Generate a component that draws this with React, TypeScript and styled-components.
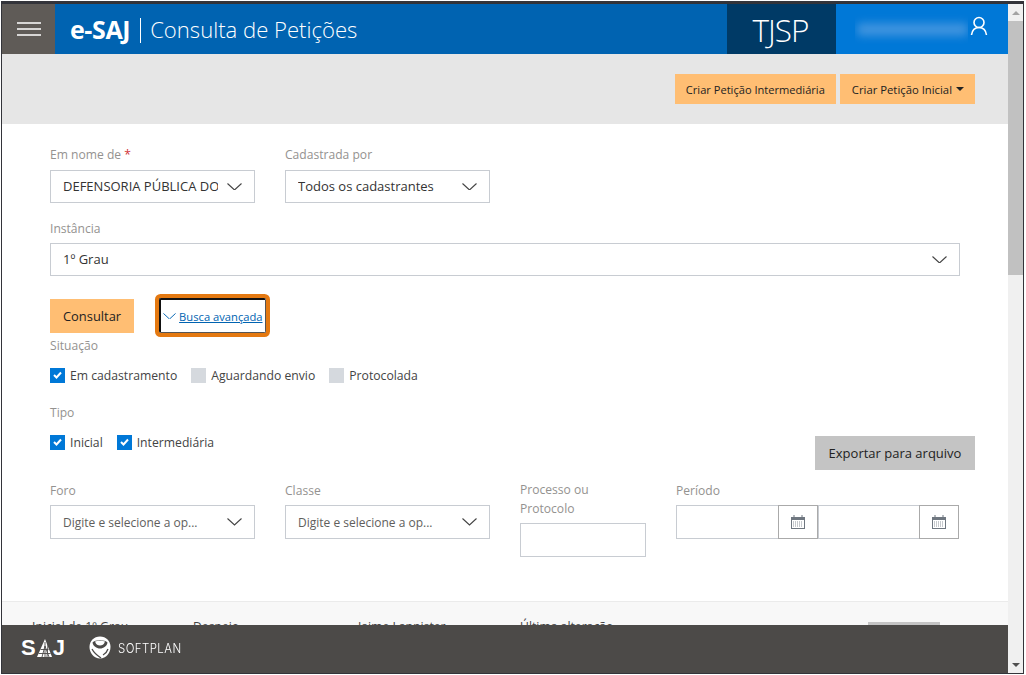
import React from 'react'
import styled, { createGlobalStyle } from 'styled-components'

const GlobalStyle = createGlobalStyle`
  html, body {
    margin: 0;
    padding: 0;
    background: #fff;
    overflow: hidden;
  }
  * {
    box-sizing: border-box;
  }
`

const FONT = `'Open Sans', 'Noto Sans', 'Liberation Sans', sans-serif`

const Frame = styled.div`
  display: flex;
  width: 1023px;
  height: 673px;
  margin: 1px 0 0 1px;
  border: 1px solid #33343a;
  border-top-width: 3px;
  font-family: ${FONT};
  font-size: 12.2px;
  color: #333;
  background: #fff;
`

const Main = styled.div`
  display: flex;
  flex-direction: column;
  width: 1006px;
  min-width: 0;
`

const Header = styled.header`
  display: flex;
  flex-shrink: 0;
  height: 50px;
  background: #0063b1;
  color: #fff;
`

const MenuButton = styled.div`
  display: flex;
  align-items: center;
  justify-content: center;
  width: 53px;
  background: #5f5b57;
`

const Title = styled.div`
  display: flex;
  flex: 1;
  align-items: center;
  padding-left: 15px;
  font-size: 22.1px;
  font-weight: 300;
  white-space: nowrap;
`

const Brand = styled.strong`
  font-size: 25px;
  font-weight: 700;
  letter-spacing: -0.4px;
`

const Separator = styled.span`
  width: 1px;
  height: 25px;
  margin: 2px 9px 0 10px;
  background: #fff;
`

const Court = styled.div`
  display: flex;
  align-items: center;
  justify-content: center;
  width: 109px;
  padding-right: 2px;
  background: #003a66;
  font-size: 31.5px;
  font-weight: 300;
  letter-spacing: -1px;
`

const UserArea = styled.div`
  display: flex;
  align-items: center;
  gap: 2px;
  width: 172px;
  padding: 0 0 6px 19px;
  background: #0078d7;
`

const NameClip = styled.div`
  display: flex;
  align-items: center;
  overflow: hidden;
  width: 113px;
  height: 30px;
  margin-top: 6px;
`

const BlurredName = styled.div`
  width: 122px;
  height: 13px;
  margin-left: 2px;
  border-radius: 4px;
  background: #3e93de;
  filter: blur(4px);
`

const ActionBand = styled.div`
  display: flex;
  flex-shrink: 0;
  justify-content: flex-end;
  gap: 4px;
  height: 70px;
  padding: 20px 33px 0 0;
  background: #e6e6e6;
`

const OrangeButton = styled.button`
  display: flex;
  align-items: center;
  justify-content: center;
  gap: 4px;
  height: ${p => (p.$tall ? 34 : 30)}px;
  padding: 0 ${p => (p.$tall ? 13 : 11)}px;
  border: 0;
  background: #ffbe73;
  color: #222;
  font-family: inherit;
  font-size: ${p => (p.$tall ? 12.9 : 11.1)}px;
  white-space: nowrap;
`

const MenuButtonLabel = styled.span`
  margin-left: 1px;
  font-size: 11.3px;
`

const Caret = styled.span`
  width: 0;
  height: 0;
  border-left: 4px solid transparent;
  border-right: 4px solid transparent;
  border-top: 4px solid #222;
`

const Viewport = styled.div`
  flex: 1;
  min-height: 0;
  overflow: hidden;
`

const Form = styled.div`
  padding: 22px 33px 44px 48px;
`

const Row = styled.div`
  display: flex;
  gap: 30px;
  margin-top: ${p => p.$top ?? 0}px;
`

const Field = styled.div`
  width: ${p => (p.$width ? `${p.$width}px` : 'auto')};
`

const Label = styled.label`
  display: block;
  height: 18px;
  margin-bottom: ${p => p.$gap ?? 6}px;
  color: #949290;
  font-size: 12.1px;
  line-height: 18px;
`

const Required = styled.span`
  color: #d13438;
`

const Select = styled.div`
  display: flex;
  align-items: center;
  justify-content: space-between;
  width: 100%;
  height: ${p => p.$height ?? 33}px;
  padding: 0 12px;
  border: 1px solid #c8ccd2;
  background: #fff;
`

const SelectText = styled.span`
  overflow: hidden;
  max-width: 155px;
  margin-top: ${p => (p.$muted ? 0 : -2)}px;
  color: ${p => (p.$muted ? '#605e5c' : '#333')};
  font-size: ${p => (p.$muted ? 12 : 13)}px;
  white-space: nowrap;
`

const ButtonRow = styled.div`
  display: flex;
  align-items: center;
  height: 34px;
  margin: 23px 0 4px;
`

const FocusRing = styled.a`
  display: flex;
  align-items: center;
  width: 107px;
  height: 35px;
  margin: -1px 0 0 25px;
  padding-left: 2px;
  border: 2px solid #111;
  border-right: 1px solid #555;
  border-bottom: 1px solid #555;
  border-radius: 2px;
  box-shadow: 0 0 0 4px #e47911;
  color: #0063b1;
  font-size: 11.2px;
  white-space: nowrap;
`

const LinkText = styled.span`
  padding-left: 3px;
  text-decoration: underline;
`

const CheckRow = styled.div`
  display: flex;
  align-items: center;
  gap: 14px;
  height: 16px;
`

const CheckItem = styled.div`
  display: flex;
  align-items: center;
  gap: 5px;
  color: #444;
`

const Box = styled.span`
  display: flex;
  align-items: center;
  justify-content: center;
  width: 15px;
  height: 15px;
  background: ${p => (p.$checked ? '#0078d7' : '#d5d9de')};
`

const TipoRow = styled.div`
  display: flex;
  align-items: flex-end;
  justify-content: space-between;
  margin-top: 21px;
`

const TipoGroup = styled.div`
  padding-bottom: 20px;
`

const ExportButton = styled.button`
  width: 160px;
  height: 34px;
  border: 0;
  background: #c4c4c4;
  color: #222;
  font-family: inherit;
  font-size: 13px;
`

const TextInput = styled.div`
  width: ${p => p.$width}px;
  height: 34px;
  border: 1px solid #c8ccd2;
  background: #fff;
`

const StackedLabel = styled.div`
  margin: -2px 0 5px;
  color: #949290;
  font-size: 12.1px;
  line-height: 19px;
`

const DateGroup = styled.div`
  display: flex;
`

const DateButton = styled.div`
  display: flex;
  align-items: center;
  justify-content: center;
  width: 40px;
  height: 34px;
  margin-left: -1px;
  border: 1px solid #aaa;
  background: #fff;
`

const ResultRow = styled.div`
  display: grid;
  grid-template-columns: 161px 165px 162px 348px 72px;
  height: 60px;
  padding: 16px 0 0 30px;
  border-top: 1px solid #ebebeb;
  background: #f8f8f8;
  color: #444;
`

const ResultCell = styled.span`
  white-space: nowrap;
`

const ResultAction = styled.span`
  display: block;
  height: 40px;
  margin-top: 4px;
  background: #c4c4c4;
`

const Footer = styled.footer`
  display: flex;
  flex-shrink: 0;
  align-items: center;
  gap: 24px;
  height: 48px;
  padding: 0 0 3px 19px;
  background: #4c4a48;
  color: #fff;
`

const SajLogo = styled.div`
  display: flex;
  align-items: center;
  font-family: 'Liberation Sans', sans-serif;
  font-size: 22px;
  font-weight: 700;
`

const SoftplanLogo = styled.div`
  display: flex;
  align-items: center;
  gap: 7px;
`

const SoftplanName = styled.span`
  display: inline-block;
  font-family: 'Inter', sans-serif;
  font-size: 13.5px;
  font-weight: 300;
  letter-spacing: 0.5px;
  transform: scaleX(0.85);
  transform-origin: left center;
`

const Scrollbar = styled.div`
  display: flex;
  flex-direction: column;
  align-items: center;
  width: 15px;
  background: #f0f0f0;
`

const ScrollArrow = styled.div`
  display: flex;
  flex-shrink: 0;
  align-items: center;
  justify-content: center;
  width: 100%;
  height: 17px;
`

const ArrowUp = styled(Caret)`
  border-top: 0;
  border-bottom: 4px solid #a3a3a3;
`

const ArrowDown = styled(Caret)`
  border-top-color: #505050;
`

const ScrollThumb = styled.div`
  width: 100%;
  height: 254px;
  background: #c1c1c1;
`

const ScrollSpace = styled.div`
  flex: 1;
`

const MenuIcon = () => (
  <svg width="24" height="14" viewBox="0 0 24 14">
    <path d="M0 1h24M0 7h24M0 13h24" stroke="#fff" strokeWidth="1.6" />
  </svg>
)

const UserIcon = () => (
  <svg width="18" height="20" viewBox="0 0 18 20" fill="none" stroke="#fff" strokeWidth="1.6">
    <circle cx="9" cy="6.5" r="5" />
    <path d="M1.5 19c.6-4.4 3.4-7.5 7.5-7.5s6.900 3.100 7.500 7.500" />
  </svg>
)

const Chevron = ({ size = 15, color = '#444' }: { size?: number; color?: string }) => (
  <svg width={size} height={size / 2} viewBox="0 0 30 15" fill="none" stroke={color} strokeWidth="2.2">
    <path d="M1 1l14 13L29 1" />
  </svg>
)

const CheckMark = () => (
  <svg width="9" height="8" viewBox="0 0 9 8" fill="none" stroke="#fff" strokeWidth="2">
    <path d="M1 4l2.500 2.500L8 1.500" />
  </svg>
)

const CalendarIcon = () => (
  <svg width="14" height="14" viewBox="0 0 14 14">
    <rect x="0.500" y="2.500" width="13" height="11" fill="#fff" stroke="#6f7780" />
    <rect x="0" y="2" width="14" height="3" fill="#6f7780" />
    <path d="M3 0v2M11 0v2" stroke="#6f7780" />
    <path d="M2 7h10M2 9h10M2 11h10" stroke="#8d949c" strokeDasharray="1 1" />
  </svg>
)

const MeshA = () => (
  <svg width="17" height="20" viewBox="0 0 17 20" fill="none">
    <path d="M9 1L1 19h15z" fill="#fff" />
    <path
      d="M9 4v15M6 19l3-11 4 11M2.500 15.500h12M4.500 11.500h8M12 6l-1 13"
      stroke="#4c4a48"
      strokeWidth="0.9"
    />
  </svg>
)

const SoftplanMark = () => (
  <svg width="22" height="23" viewBox="0 0 22 23">
    <path d="M11 .5C17 .5 21.500 5 21.500 11S17 22.500 11 22.500.5 17 .5 11 5 .5 11 .5z" fill="#fff" />
    <path d="M3.500 6.500C6 3.500 16 3.500 18.500 6.500 18 10 14.500 12.500 11 12.500S4 10 3.500 6.500z" fill="#4c4a48" />
    <path d="M6 5.500C8 4.500 14 4.500 16 5.500 15 8.500 13 9.500 11 9.500S7 8.500 6 5.500z" fill="#fff" />
    <path d="M3 13c2 4 6 7 9 9M19 13c-1 3-3 5-5 6" stroke="#4c4a48" strokeWidth="1.300" fill="none" />
  </svg>
)

const Check = ({ label, checked }: { label: string; checked?: boolean }) => (
  <CheckItem>
    <Box $checked={checked}>{checked && <CheckMark />}</Box>
    {label}
  </CheckItem>
)

export default function App() {
  return (
    <>
      <GlobalStyle />
      <Frame>
        <Main>
          <Header>
            <MenuButton>
              <MenuIcon />
            </MenuButton>
            <Title>
              <Brand>e-SAJ</Brand>
              <Separator />
              Consulta de Petições
            </Title>
            <Court>TJSP</Court>
            <UserArea>
              <NameClip>
                <BlurredName />
              </NameClip>
              <UserIcon />
            </UserArea>
          </Header>

          <ActionBand>
            <OrangeButton>Criar Petição Intermediária</OrangeButton>
            <OrangeButton>
              <MenuButtonLabel>Criar Petição Inicial</MenuButtonLabel>
              <Caret />
            </OrangeButton>
          </ActionBand>

          <Viewport>
            <Form>
              <Row>
                <Field $width={205}>
                  <Label>
                    Em nome de <Required>*</Required>
                  </Label>
                  <Select>
                    <SelectText>DEFENSORIA PÚBLICA DO ESTADO</SelectText>
                    <Chevron />
                  </Select>
                </Field>
                <Field $width={205}>
                  <Label>Cadastrada por</Label>
                  <Select>
                    <SelectText>Todos os cadastrantes</SelectText>
                    <Chevron />
                  </Select>
                </Field>
              </Row>

              <Row $top={17}>
                <Field $width={910}>
                  <Label $gap={5}>Instância</Label>
                  <Select>
                    <SelectText>1º Grau</SelectText>
                    <Chevron />
                  </Select>
                </Field>
              </Row>

              <ButtonRow>
                <OrangeButton $tall>Consultar</OrangeButton>
                <FocusRing>
                  <Chevron size={13} color="#0063b1" />
                  <LinkText>Busca avançada</LinkText>
                </FocusRing>
              </ButtonRow>

              <Label $gap={12}>Situação</Label>
              <CheckRow>
                <Check label="Em cadastramento" checked />
                <Check label="Aguardando envio" />
                <Check label="Protocolada" />
              </CheckRow>

              <TipoRow>
                <TipoGroup>
                  <Label $gap={12}>Tipo</Label>
                  <CheckRow>
                    <Check label="Inicial" checked />
                    <Check label="Intermediária" checked />
                  </CheckRow>
                </TipoGroup>
                <ExportButton>Exportar para arquivo</ExportButton>
              </TipoRow>

              <Row $top={12}>
                <Field $width={205}>
                  <Label $gap={5}>Foro</Label>
                  <Select $height={34}>
                    <SelectText $muted>Digite e selecione a op...</SelectText>
                    <Chevron />
                  </Select>
                </Field>
                <Field $width={205}>
                  <Label $gap={5}>Classe</Label>
                  <Select $height={34}>
                    <SelectText $muted>Digite e selecione a op...</SelectText>
                    <Chevron />
                  </Select>
                </Field>
                <Field $width={126}>
                  <StackedLabel>
                    Processo ou
                    <br />
                    Protocolo
                  </StackedLabel>
                  <TextInput $width={126} />
                </Field>
                <Field>
                  <Label $gap={5}>Período</Label>
                  <DateGroup>
                    <TextInput $width={103} />
                    <DateButton>
                      <CalendarIcon />
                    </DateButton>
                    <TextInput $width={102} />
                    <DateButton>
                      <CalendarIcon />
                    </DateButton>
                  </DateGroup>
                </Field>
              </Row>
            </Form>

            <ResultRow>
              <ResultCell>Inicial de 1º Grau</ResultCell>
              <ResultCell>Despejo</ResultCell>
              <ResultCell>Jaime Lannister</ResultCell>
              <ResultCell>Última alteração</ResultCell>
              <ResultAction />
            </ResultRow>
          </Viewport>

          <Footer>
            <SajLogo>
              S
              <MeshA />J
            </SajLogo>
            <SoftplanLogo>
              <SoftplanMark />
              <SoftplanName>SOFTPLAN</SoftplanName>
            </SoftplanLogo>
          </Footer>
        </Main>

        <Scrollbar>
          <ScrollArrow>
            <ArrowUp />
          </ScrollArrow>
          <ScrollThumb />
          <ScrollSpace />
          <ScrollArrow>
            <ArrowDown />
          </ScrollArrow>
        </Scrollbar>
      </Frame>
    </>
  )
}
